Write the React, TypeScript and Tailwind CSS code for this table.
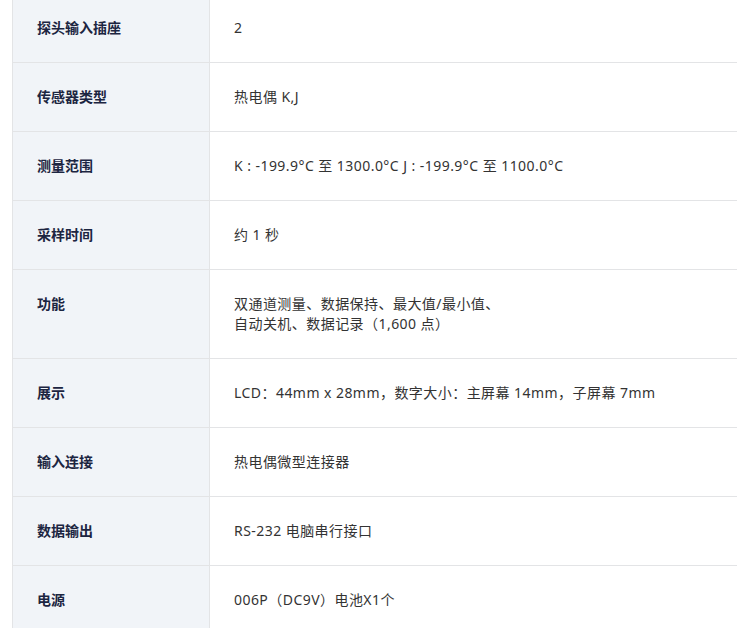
import React from 'react';

const specs: { label: string; value: React.ReactNode }[] = [
    { label: '探头输入插座', value: '2' },
    { label: '传感器类型', value: '热电偶 K,J' },
    { label: '测量范围', value: 'K : -199.9°C 至 1300.0°C J : -199.9°C 至 1100.0°C' },
    { label: '采样时间', value: '约 1 秒' },
    {
        label: '功能',
        value: (
            <>
                双通道测量、数据保持、最大值/最小值、
                <br />
                自动关机、数据记录（1,600 点）
            </>
        ),
    },
    { label: '展示', value: 'LCD：44mm x 28mm，数字大小：主屏幕 14mm，子屏幕 7mm' },
    { label: '输入连接', value: '热电偶微型连接器' },
    { label: '数据输出', value: 'RS-232 电脑串行接口' },
    { label: '电源', value: '006P（DC9V）电池X1个' },
];

const App: React.FC = () => {
    return (
        <div
            className="w-[737px] h-[628px] overflow-hidden bg-white pl-[12px]"
            style={{ fontFamily: '"Noto Sans", "Noto Sans CJK SC", sans-serif' }}
        >
            <table className="mt-[-7px] w-[760px] border-collapse text-[14px] leading-[20px]">
                <tbody>
                    {specs.map((row) => (
                        <tr key={row.label}>
                            <th className="w-[197px] border border-[#e3e4e6] bg-[#f1f4f8] px-6 py-6 text-left align-top font-bold text-[#1c2541]">
                                {row.label}
                            </th>
                            <td className="border border-[#e3e4e6] px-6 py-6 align-middle tracking-[0.45px] text-[#333333]">
                                {row.value}
                            </td>
                        </tr>
                    ))}
                </tbody>
            </table>
        </div>
    );
};

export default App;
